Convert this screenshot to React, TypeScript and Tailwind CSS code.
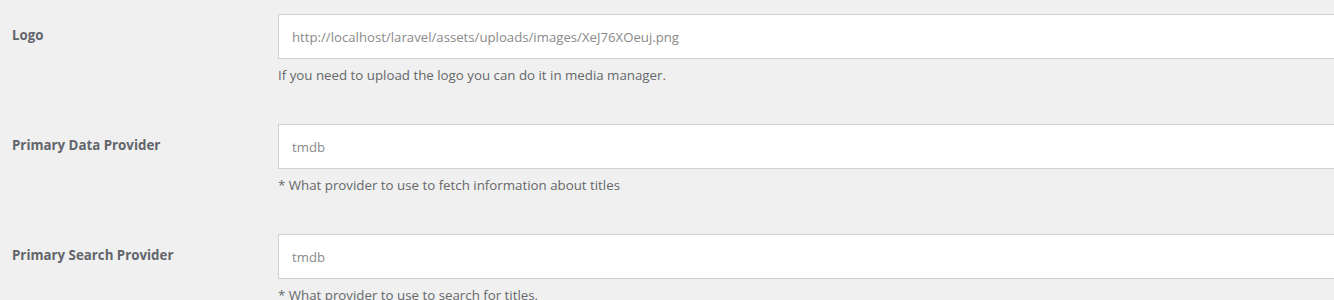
import React from "react";

interface SettingRowProps {
  label: string;
  value: string;
  help: string;
}

const rows: SettingRowProps[] = [
  {
    label: "Logo",
    value: "http://localhost/laravel/assets/uploads/images/XeJ76XOeuj.png",
    help: "If you need to upload the logo you can do it in media manager.",
  },
  {
    label: "Primary Data Provider",
    value: "tmdb",
    help: "* What provider to use to fetch information about titles",
  },
  {
    label: "Primary Search Provider",
    value: "tmdb",
    help: "* What provider to use to search for titles.",
  },
];

function SettingRow({ label, value, help }: SettingRowProps) {
  return (
    <div className="flex items-start pb-[39px]">
      <label className="w-[278px] shrink-0 pl-3 pt-[11px] text-[13.3px] leading-5 font-bold text-[#62656b]">
        {label}
      </label>
      <div className="shrink-0">
        <input
          type="text"
          readOnly
          value={value}
          className="block h-[45px] w-[1100px] border border-[#cfd0cf] bg-white px-[13px] text-[13.2px] text-[#8a8a8a] outline-none"
        />
        <p className="mt-[6px] text-[13.3px] leading-5 text-[#66686b]">{help}</p>
      </div>
    </div>
  );
}

export default function App() {
  return (
    <div
      className="h-[300px] w-[1334px] overflow-hidden bg-[#eff0ef] pt-[14px]"
      style={{ fontFamily: '"Open Sans", "Noto Sans", sans-serif' }}
    >
      {rows.map((row) => (
        <SettingRow key={row.label} {...row} />
      ))}
    </div>
  );
}
